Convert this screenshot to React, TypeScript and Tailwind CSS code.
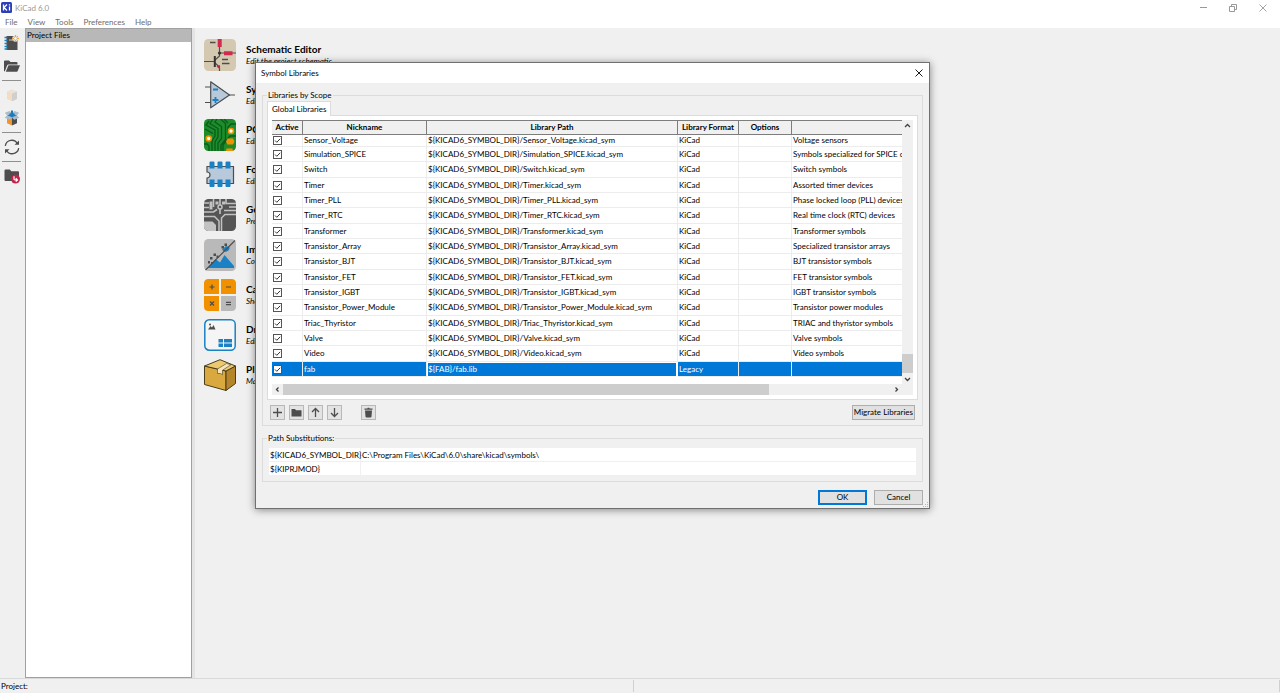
import { ReactNode } from "react";
import clsx from "clsx";

const MENUS = ["File", "View", "Tools", "Preferences", "Help"];

const LIBRARIES = [
  { name: "Sensor_Voltage", descr: "Voltage sensors" },
  { name: "Simulation_SPICE", descr: "Symbols specialized for SPICE circuit simulation" },
  { name: "Switch", descr: "Switch symbols" },
  { name: "Timer", descr: "Assorted timer devices" },
  { name: "Timer_PLL", descr: "Phase locked loop (PLL) devices" },
  { name: "Timer_RTC", descr: "Real time clock (RTC) devices" },
  { name: "Transformer", descr: "Transformer symbols" },
  { name: "Transistor_Array", descr: "Specialized transistor arrays" },
  { name: "Transistor_BJT", descr: "BJT transistor symbols" },
  { name: "Transistor_FET", descr: "FET transistor symbols" },
  { name: "Transistor_IGBT", descr: "IGBT transistor symbols" },
  { name: "Transistor_Power_Module", descr: "Transistor power modules" },
  { name: "Triac_Thyristor", descr: "TRIAC and thyristor symbols" },
  { name: "Valve", descr: "Valve symbols" },
  { name: "Video", descr: "Video symbols" },
];

const SUBSTITUTIONS = [
  { name: "${KICAD6_SYMBOL_DIR}", value: "C:\\Program Files\\KiCad\\6.0\\share\\kicad\\symbols\\" },
  { name: "${KIPRJMOD}", value: "" },
];

/* ---------- left toolbar icons ---------- */

const NewProjectIcon = () => (
  <svg viewBox="0 0 16 16" className="size-4">
    <path d="M2.5 1h11v14h-11z" fill="#4d4d4d" />
    <path d="M5 4h4v2H5z" fill="#8a8a8a" />
    <path d="M.5 2.500h3M.5 5.500h3M.5 8.500h3M.5 11.500h3M.5 14h3" stroke="#1a81c4" strokeWidth="1.300" />
    <circle cx="11.500" cy="3.500" r="3.200" fill="#e9dfcf" />
    <path d="M11.500 0v7M8 3.500h7M9.100 1.100l4.800 4.800M13.900 1.100L9.100 5.900" stroke="#f2a33a" strokeWidth="1" />
    <circle cx="11.500" cy="3.500" r="1.300" fill="#fff" />
  </svg>
);

const OpenProjectIcon = () => (
  <svg viewBox="0 0 16 16" className="size-4">
    <path d="M0 13V3.500q0-1 1-1h4l1.500 1.500h6q1 0 1 1v1.500H4.500q-1 0-1.400.9L.8 13.500z" fill="#4d4d4d" />
    <path d="M4.500 7.300H16l-2.300 5.700q-.3.700-1 .7H1.800z" fill="#4d4d4d" />
  </svg>
);

const ArchiveIcon = () => (
  <svg viewBox="0 0 16 16" className="size-4">
    <path d="M8 2.500l5 2v7.500l-5 2.200-5-2.200V4.500z" fill="#f3dcc0" />
    <path d="M8 6.500l5-2v7.500l-5 2.200z" fill="#cfcfcf" />
    <path d="M3 4.500l5-2 5 2-5 2z" fill="#e8e3dc" />
  </svg>
);

const UnarchiveIcon = () => (
  <svg viewBox="0 0 16 16" className="size-4">
    <path d="M3 5.500l5 2v8l-5-2.300z" fill="#f2932b" />
    <path d="M8 7.500l5-2v7.700l-5 2.300z" fill="#4d4d4d" />
    <path d="M3 5.300l5-2.300 5 2.300-5 2.300z" fill="#1b7cc0" />
    <path d="M8 3L5.500 1 .8 2.700 3 5.200zM8 3l2.500-2 4.700 1.700L13 5.200zM3 5.500l5 2-2.200 2.200L.6 7.700zM13 5.500l-5 2 2.200 2.200 5.200-2z" fill="#a9bdca" />
    <path d="M7 .5h2v2.700h1.800L8 5.800 5.200 3.200H7z" fill="#1b7cc0" />
  </svg>
);

const RefreshIcon = () => (
  <svg viewBox="0 0 16 16" className="size-4" fill="none" stroke="#4d4d4d" strokeWidth="1.300">
    <path d="M1.300 6.800A6.500 6.500 0 0 1 13.500 4.800M14.700 9.200A6.500 6.500 0 0 1 2.500 11.200" />
    <path d="M15 1.500v4.300h-4.500zM1 14.500v-4.300h4.500z" fill="#4d4d4d" stroke="none" />
  </svg>
);

const BrowseFilesIcon = () => (
  <svg viewBox="0 0 16 16" className="size-4">
    <path d="M.5 2.500q0-1 1-1h4.300l1.500 1.800H14q1 0 1 1V12q0 1-1 1H1.500q-1 0-1-1z" fill="#4d4d4d" />
    <circle cx="11.500" cy="11" r="4.500" fill="#c3244c" />
    <path d="M10 8.200v2.900q0 .8.800.8h2.400M11.800 10.200l1.700 1.700-1.700 1.700" fill="none" stroke="#fff" strokeWidth="1.200" />
  </svg>
);

/* ---------- launcher icons ---------- */

const SchematicIcon = () => (
  <svg viewBox="0 0 32 32" className="size-8">
    <rect width="32" height="32" rx="4.500" fill="#d5c8b0" />
    <path d="M15.500 7.500V14.500M15.500 14h4.500M28 14h4M0 22.500h10.500M15.500 14v3l-4.500 4M11 24l4.500 4v4" fill="none" stroke="#4d4d4d" strokeWidth="1.200" />
    <path d="M10.800 17v11" stroke="#333" strokeWidth="2" />
    <path d="M13.700 0h4v8h-4zM20 12.200h8.500v4H20z" fill="#d02a50" />
    <circle cx="15.500" cy="14" r="1.600" fill="#333" />
    <path d="M12.500 27.500l3.500-1.500v4.500z" fill="#c3244c" />
    <path d="M6 3.500h5.500M18 20.500h6M18 24.500h7.500" stroke="#4d4d4d" strokeWidth="1.500" />
  </svg>
);

const SymbolIcon = () => (
  <svg viewBox="0 0 32 32" className="size-8">
    <path d="M1 8h6M1 23.500h6M25 16h6" stroke="#4d4d4d" strokeWidth="1.200" />
    <path d="M6.700 2.800v26L25.500 16z" fill="#b7c9da" stroke="#4d4d4d" strokeWidth="1.200" strokeLinejoin="round" />
    <path d="M9 10.500h5M8.500 21h6M11.500 18v6" stroke="#1a81c4" strokeWidth="1.800" />
  </svg>
);

const PcbIcon = () => (
  <svg viewBox="0 0 32 32" className="size-8">
    <rect width="32" height="32" rx="4.500" fill="#1c8c2c" />
    <g fill="none" stroke="#0a5c18" strokeWidth="1.300">
      <path d="M1 10l8 4.500M5 2l-3 4 9 5v6l-3 5v10M9 0L6 4.500l8 5V18l-3 5v9M13 0l-2 3 6.500 4.500v12L14 24v8M16.500 0l5 4.500v16L17 26v6M20 0l4 4M32 5h-5l-3 3v5M32 17h-6l-7 9v6M0 25h3l2 2v5" />
    </g>
    <circle cx="27" cy="12" r="2.500" fill="#fff" stroke="#f29100" strokeWidth="1.600" />
    <circle cx="4.700" cy="19.500" r="2.500" fill="#fff" stroke="#f29100" strokeWidth="1.600" />
    <path d="M23.500 19.500h5.500l1.500 3-1.500 3h-5.500l-1.500-3zM22.500 29.500h6l.5 2.500h-7z" fill="#f29100" />
  </svg>
);

const FootprintIcon = () => (
  <svg viewBox="0 0 32 32" className="size-8">
    <path d="M3 7.500h26.500v17H3v-5.500a3 3 0 0 0 0-6z" fill="#b7c9da" stroke="#4d4d4d" strokeWidth="1.200" />
    <path
      d="M6.500 2.500h3q1 0 1 1v6h-5v-6q0-1 1-1zM14.500 2.500h3q1 0 1 1v6h-5v-6q0-1 1-1zM22.500 2.500h3q1 0 1 1v6h-5v-6q0-1 1-1zM5.500 20.500h5v6.500q0 1-1 1h-3q-1 0-1-1zM13.500 20.500h5v6.500q0 1-1 1h-3q-1 0-1-1zM21.500 20.500h5v6.500q0 1-1 1h-3q-1 0-1-1z"
      fill="#1a81c4"
    />
  </svg>
);

const GerberIcon = () => (
  <svg viewBox="0 0 32 32" className="size-8">
    <clipPath id="gbr">
      <rect width="32" height="32" rx="4.500" />
    </clipPath>
    <g clipPath="url(#gbr)" fill="none">
      <path d="M0 0h32v32H0z" fill="#555" />
      <path d="M0 22.500h8.500l3.500 3.500v6H0z" fill="#c2c2c2" />
      <path d="M0 17.500h10.500l4.500 4.500v10M17.500 32V19l3.500-3.500h11" stroke="#c2c2c2" strokeWidth="1.500" />
      <path d="M0 13h9.500l3.500-2.500M9.500 0v8M0 4h5M0 8.500h5M16 0v15M22 0v4.500h10M20 11.500h12M25 8h7" stroke="#c2c2c2" strokeWidth="1.600" />
      <path d="M5.500 2.500h3v8h-3zM11.500 2.500h3v3h-3zM18 2.500h3v3h-3z" fill="#c2c2c2" />
      <circle cx="16" cy="8" r="2" fill="#555" stroke="#c2c2c2" strokeWidth="1.500" />
    </g>
  </svg>
);

const ImageIcon = () => (
  <svg viewBox="0 0 32 32" className="size-8">
    <rect width="32" height="32" rx="4.500" fill="#b9b9b9" />
    <path d="M4 29l7.500-9 4.500 3.500L20.500 16 30 27v2z" fill="#1a81c4" />
    <path d="M18 10.500a4 4 0 0 0 7.500-2.500L22 7z" fill="#1a81c4" />
    <path d="M1.500 31L31 1.500" stroke="#4d4d4d" strokeWidth="1.100" />
    <g fill="#4d4d4d">
      <path d="M17.500 7h2.500v2.500h-2.500zM20.500 4.500H23V7h-2.500zM9.500 14.500H12V17H9.500zM6 18h2.500v2.500H6zM12.500 16.500h2V19h-2zM4 22h2v2.500H4zM7 23h2v2H7z" />
    </g>
  </svg>
);

const CalculatorIcon = () => (
  <svg viewBox="0 0 32 32" className="size-8">
    <path d="M4.500 0H15v15H0V4.500Q0 0 4.500 0zM17 0h10.500Q32 0 32 4.500V15H17zM0 17h15v15H4.500Q0 32 0 27.500z" fill="#f29100" />
    <path d="M17 17h15v10.500q0 4.500-4.500 4.500H17z" fill="#b9b9b9" />
    <path d="M5.500 8h5M8 5.500v5M22 8h5M6 22.500l4 4M10 22.500l-4 4M22 23.300h5M22 25.700h5" stroke="#4d4d4d" strokeWidth="1.200" />
  </svg>
);

const SheetIcon = () => (
  <svg viewBox="0 0 32 32" className="size-8">
    <rect x=".8" y=".8" width="30.400" height="30.400" rx="4.500" fill="#f5f5f5" stroke="#1a81c4" strokeWidth="1.500" />
    <path d="M4 10.500l2.500-3.500L8 8.500 9.500 6l2 4.500z" fill="#4d4d4d" />
    <circle cx="6" cy="5.500" r="1" fill="#4d4d4d" />
    <path d="M14.500 20H19v3.500h-4.500zM20 20h8v3.500h-8zM14.500 24.500H19V28h-4.500zM20 24.500h8V28h-8z" fill="#1a81c4" />
  </svg>
);

const PackageIcon = () => (
  <svg viewBox="0 0 32 32" className="size-8">
    <g stroke="#4a3d1c" strokeWidth="1" strokeLinejoin="round">
      <path d="M.5 7L22 12v19.500L.5 25.500z" fill="#d9a93f" />
      <path d="M22 12l9.500-5v17.500L22 31.500z" fill="#b5852b" />
      <path d="M.5 7L16 .7 31.500 7 22 12z" fill="#ecc86e" />
    </g>
    <path d="M13.500 10l9-5.500 4.500 1.200-8.500 5.500v4.500l-2-1.200-3 0z" fill="#f7e6bd" stroke="#4a3d1c" strokeWidth=".6" />
  </svg>
);

const LAUNCHERS = [
  { title: "Schematic Editor", text: "Edit the project schematic", icon: <SchematicIcon /> },
  { title: "Symbol Editor", text: "Edit global and/or project symbol libraries", icon: <SymbolIcon /> },
  { title: "PCB Editor", text: "Edit the project PCB design", icon: <PcbIcon /> },
  { title: "Footprint Editor", text: "Edit global and/or project footprint libraries", icon: <FootprintIcon /> },
  { title: "Gerber Viewer", text: "Preview Gerber files", icon: <GerberIcon /> },
  { title: "Image Converter", text: "Convert bitmap images to schematic symbols", icon: <ImageIcon /> },
  { title: "Calculator Tools", text: "Show tools for calculating resistance, etc.", icon: <CalculatorIcon /> },
  { title: "Drawing Sheet Editor", text: "Edit drawing sheet borders and title blocks", icon: <SheetIcon /> },
  { title: "Plugin and Content Manager", text: "Manage downloadable packages", icon: <PackageIcon /> },
];

/* ---------- small pieces ---------- */

const Chevron = ({ d }: { d: string }) => (
  <svg viewBox="0 0 11 11" className="size-[11px]" fill="none" stroke="#404040" strokeWidth="1.300">
    <path d={d} />
  </svg>
);

const CloseIcon = ({ className }: { className?: string }) => (
  <svg viewBox="0 0 8 8" className={clsx("size-2", className)} fill="none" stroke="currentColor" strokeWidth=".9">
    <path d="M.5.5l7 7M7.500.5l-7 7" />
  </svg>
);

const Check = ({ label }: { label: string }) => (
  <span className="grid size-[9px]">
    <input
      type="checkbox"
      defaultChecked
      aria-label={label}
      className="peer size-[9px] appearance-none border border-[#555] bg-white [grid-area:1/1]"
    />
    <svg
      viewBox="0 0 9 9"
      className="pointer-events-none hidden size-[9px] [grid-area:1/1] peer-checked:block"
      fill="none"
      stroke="#333"
      strokeWidth="1"
    >
      <path d="M2 4.500l1.800 1.800L7.200 2.800" />
    </svg>
  </span>
);

const ToolButton = ({ label, className, children }: { label: string; className?: string; children: ReactNode }) => (
  <button
    aria-label={label}
    className={clsx("flex size-[15px] items-center justify-center border border-[#b8b8b8] bg-[#e3e3e3]", className)}
  >
    <svg viewBox="0 0 11 11" className="size-[11px]" fill="none" stroke="#4d4d4d" strokeWidth="1.300">
      {children}
    </svg>
  </button>
);

const Th = ({ children }: { children?: ReactNode }) => (
  <th className="h-[15px] border-y border-r border-[#7d7d7d] bg-[#f0f0f0] p-0 font-bold last:border-r-0">
    {children}
  </th>
);

const Td = ({ children }: { children?: ReactNode }) => (
  <td className="overflow-hidden border-r border-b border-[#ececec] px-px py-0 last:border-r-0">{children}</td>
);

const LibraryTable = () => (
  <table className="w-full table-fixed border-separate border-spacing-0 whitespace-nowrap leading-[11px]">
    <colgroup>
      <col className="w-[31px]" />
      <col className="w-[124px]" />
      <col className="w-[251px]" />
      <col className="w-[61px]" />
      <col className="w-[53px]" />
      <col />
    </colgroup>
    <thead>
      <tr>
        <Th>Active</Th>
        <Th>Nickname</Th>
        <Th>Library Path</Th>
        <Th>Library Format</Th>
        <Th>Options</Th>
        <Th />
      </tr>
    </thead>
    <tbody className="[&>tr]:h-[15px] [&>tr:nth-child(3n)]:h-4 [&>tr:first-child]:h-3">
      {LIBRARIES.map((lib) => (
        <tr key={lib.name}>
          <Td>
            <Check label={lib.name} />
          </Td>
          <Td>{lib.name}</Td>
          <Td>{"${KICAD6_SYMBOL_DIR}/" + lib.name + ".kicad_sym"}</Td>
          <Td>KiCad</Td>
          <Td />
          <Td>{lib.descr}</Td>
        </tr>
      ))}
      <tr className="bg-[#0078d7] text-white">
        <Td>
          <Check label="fab" />
        </Td>
        <Td>fab</Td>
        {/* the cell that holds the grid cursor */}
        <td className="border border-r-2 border-white p-0">{"${FAB}/fab.lib"}</td>
        <Td>Legacy</Td>
        <Td />
        <Td />
      </tr>
    </tbody>
  </table>
);

const SymbolLibrariesDialog = () => (
  <div
    role="dialog"
    aria-label="Symbol Libraries"
    className="absolute top-[62px] left-[255px] w-[675px] border border-[#707070] bg-[#f0f0f0] shadow-[0_1px_8px_rgba(0,0,0,0.45)]"
  >
    <div className="flex h-5 items-center justify-between bg-white pr-1.5 pb-px pl-[5px]">
      <h2>Symbol Libraries</h2>
      <button aria-label="Close">
        <CloseIcon />
      </button>
    </div>

    <fieldset className="mx-1.5 mt-1.5 border border-[#dcdcdc] px-1 pb-[5px]">
      <legend className="px-px">Libraries by Scope</legend>
      <div role="tablist" className="flex">
        <button role="tab" className="z-10 -mb-px h-[15px] border border-b-0 border-[#dcdcdc] bg-white px-1">
          Global Libraries
        </button>
      </div>
      <div className="border border-[#dcdcdc] bg-white px-1 py-1">
        <div className="flex">
          <div className="min-w-0 flex-1 overflow-hidden pb-[7px]">
            <LibraryTable />
          </div>
          <div className="flex w-[11px] flex-col justify-between bg-[#f0f0f0]">
            <Chevron d="M3 7l2.500-2.500L8 7" />
            <div>
              <div className="h-[19px] bg-[#cdcdcd]" />
              <Chevron d="M3 5l2.500 2.500L8 5" />
            </div>
          </div>
        </div>
        <div className="flex h-[11px] bg-[#f0f0f0] pr-[11px]">
          <Chevron d="M6.500 3.500L4.500 5.500l2 2" />
          <div className="flex-1">
            <div className="h-full w-4/5 bg-[#cdcdcd]" />
          </div>
          <Chevron d="M4.500 3.500l2 2-2 2" />
        </div>
      </div>

      <div className="mt-[5px] flex gap-1 px-[3px]">
        <ToolButton label="Add library">
          <path d="M5.500 1v9M1 5.500h9" />
        </ToolButton>
        <ToolButton label="Browse libraries">
          <path d="M.5 2h3.500l1 1.300h5.500V9.500H.5z" fill="#4d4d4d" stroke="none" />
        </ToolButton>
        <ToolButton label="Move up">
          <path d="M5.500 10V1.500M2 5l3.500-3.500L9 5" />
        </ToolButton>
        <ToolButton label="Move down">
          <path d="M5.500 1v8.500M2 6l3.500 3.500L9 6" />
        </ToolButton>
        <ToolButton label="Remove library" className="ml-[15px]">
          <path d="M1.500 1.500h2.800l.5-.8h1.400l.5.8h2.800v1.200h-8zM2 3.500h7l-.5 6q0 .9-1 .9h-4q-1 0-1-.9z" fill="#4d4d4d" stroke="none" />
        </ToolButton>
        <button className="ml-auto h-[15px] border border-[#adadad] bg-[#e1e1e1] px-px leading-[11px]">
          Migrate Libraries
        </button>
      </div>
    </fieldset>

    <fieldset className="mx-1.5 mt-1.5 border border-[#dcdcdc] px-1 pb-[5px]">
      <legend className="px-px">Path Substitutions:</legend>
      <div className="px-0.5 pt-1">
        <table className="w-full table-fixed border-separate border-spacing-0 bg-white">
          <tbody>
            {SUBSTITUTIONS.map((s) => (
              <tr key={s.name} className="h-[14px]">
                <th className="w-[92px] border-r border-b border-[#f0f0f0] px-px py-0 text-left font-normal">{s.name}</th>
                <td className="border-b border-[#f0f0f0] px-px py-0">{s.value}</td>
              </tr>
            ))}
          </tbody>
        </table>
      </div>
    </fieldset>

    <div className="mt-2 flex justify-end gap-[7px] pr-1.5 pb-[3px]">
      <button className="h-[15px] w-[49px] border-2 border-[#0078d7] bg-[#e1e1e1] leading-[11px]">OK</button>
      <button className="h-[15px] w-[49px] border border-[#adadad] bg-[#e1e1e1] leading-[11px]">Cancel</button>
    </div>
    <svg viewBox="0 0 6 6" className="absolute right-0 bottom-0 size-1.5" fill="#b5b5b5">
      <path d="M4 0h1v1H4zM4 2h1v1H4zM2 2h1v1H2zM4 4h1v1H4zM2 4h1v1H2zM0 4h1v1H0z" />
    </svg>
  </div>
);

const Separator = () => <div className="-my-px h-px w-[19px] bg-[#8f8f8f]" />;

const App = () => {
  return (
    <div className="relative flex h-screen flex-col overflow-hidden bg-[#f0f0f0] font-[Lato,sans-serif] text-[8px] leading-3 text-black">
      <header className="bg-white">
        <div className="flex h-[15px] items-center pr-0.5 pl-px">
          <svg viewBox="0 0 11 11" className="size-[11px]">
            <rect width="11" height="11" rx="1.500" fill="#2c3fb5" />
            <path d="M2.500 2.500v6M6 2.500L3 5.500l3 3M8.500 4.500v4M8.500 2.200v1.200" stroke="#fff" strokeWidth="1.300" fill="none" />
          </svg>
          <h1 className="flex-1 pl-[3px] text-[#999]">KiCad 6.0</h1>
          <div className="flex text-[#999]">
            <button aria-label="Minimize" className="flex w-[30px] items-center justify-center">
              <span className="h-px w-[7px] bg-[#999]" />
            </button>
            <button aria-label="Restore" className="flex w-[30px] items-center justify-center">
              <svg viewBox="0 0 8 8" className="size-2" fill="none" stroke="currentColor">
                <path d="M.5 2.500h5v5h-5zM2.500 2.500v-2h5v5h-2" />
              </svg>
            </button>
            <button aria-label="Close window" className="flex w-[30px] items-center justify-center">
              <CloseIcon />
            </button>
          </div>
        </div>
        <nav className="flex h-[13px] items-center text-[#6d6d6d]">
          {MENUS.map((menu) => (
            <button key={menu} className="px-[5px]">
              {menu}
            </button>
          ))}
        </nav>
      </header>

      <div className="flex min-h-0 flex-1">
        <div className="flex w-[25px] flex-col items-center gap-[7px] pt-[7px] pr-0.5">
          <button aria-label="New project"><NewProjectIcon /></button>
          <button aria-label="Open project"><OpenProjectIcon /></button>
          <Separator />
          <button aria-label="Archive project" disabled><ArchiveIcon /></button>
          <button aria-label="Unarchive project"><UnarchiveIcon /></button>
          <Separator />
          <button aria-label="Refresh"><RefreshIcon /></button>
          <Separator />
          <button aria-label="Browse project files"><BrowseFilesIcon /></button>
        </div>

        <aside className="flex w-[167px] flex-col border border-[#a0a0a0] bg-white">
          <div className="h-[13px] bg-[#b8b8b8] px-px">Project Files</div>
        </aside>
        <div className="w-[3px] bg-[#e4e4e4]" />

        <main className="flex flex-1 flex-col gap-2 pt-[11px] pl-[9px]">
          {LAUNCHERS.map((item) => (
            <button key={item.title} className="flex items-start gap-2.5 text-left">
              {item.icon}
              <span className="flex flex-col pt-1">
                <span className="text-[10px] font-bold">{item.title}</span>
                <span className="italic">{item.text}</span>
              </span>
            </button>
          ))}
        </main>
      </div>

      <footer className="flex h-[15px] items-center border-t border-[#d9d9d9]">
        <div className="w-[634px] border-r border-[#d0d0d0] pl-px">Project:</div>
        <div className="flex-1 border-r border-[#d0d0d0] pl-px">&nbsp;</div>
      </footer>

      <SymbolLibrariesDialog />
    </div>
  );
};

export default App;
